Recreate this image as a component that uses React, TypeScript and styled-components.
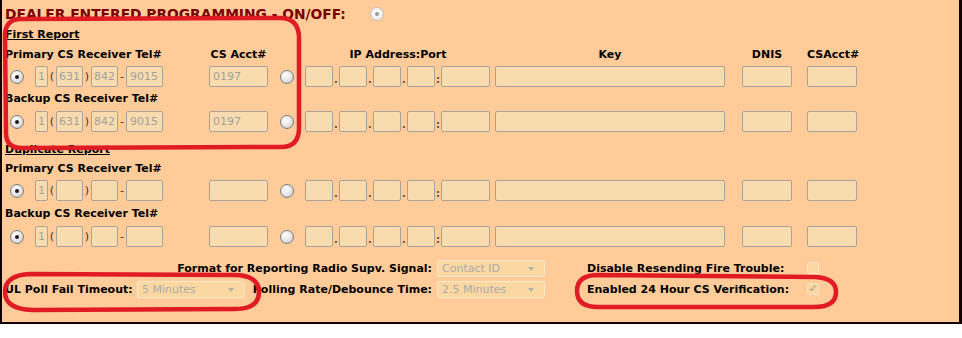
import styled, { createGlobalStyle } from "styled-components";

const GlobalStyles = createGlobalStyle`
  html, body {
    margin: 0;
    padding: 0;
    background: #ffffff;
  }
  body {
    font-family: "DejaVu Sans", Verdana, sans-serif;
    font-size: 11px;
    color: #000;
  }
`;

const Frame = styled.div`
  position: relative;
  box-sizing: border-box;
  width: 962px;
  height: 324px;
  background: #ffcc99;
  border-left: 2px solid #120000;
  border-right: 3px solid #120000;
  border-bottom: 2px solid #120000;
  padding-left: 3px;
  overflow: hidden;
`;

const TitleRow = styled.div`
  display: flex;
  align-items: center;
  height: 27px;
  gap: 24px;
`;

const Title = styled.span`
  font-size: 13.8px;
  font-weight: bold;
  color: #7a0000;
`;

const SectionTitle = styled.div<{ $top?: number }>`
  margin-top: ${(p) => p.$top ?? 0}px;
  height: 16px;
  line-height: 16px;
  font-weight: bold;
  text-decoration: underline;
`;

const SubLabel = styled.div<{ $h: number }>`
  height: ${(p) => p.$h}px;
  line-height: ${(p) => p.$h}px;
  font-weight: bold;
`;

const FieldGrid = styled.div<{ $h: number; $top?: number }>`
  display: grid;
  grid-template-columns: 204px 60px 36px 190px 247px 65px 50px;
  align-items: center;
  height: ${(p) => p.$h}px;
  margin-top: ${(p) => p.$top ?? 0}px;
`;

const HeadCell = styled.div<{ $w?: number; $align?: string }>`
  width: ${(p) => (p.$w ? `${p.$w}px` : "auto")};
  text-align: ${(p) => p.$align ?? "center"};
  font-weight: bold;
  white-space: nowrap;
`;

const Cluster = styled.div<{ $pad?: number }>`
  display: flex;
  align-items: center;
  padding-left: ${(p) => p.$pad ?? 0}px;
`;

const Box = styled.div<{ $w: number }>`
  box-sizing: border-box;
  width: ${(p) => p.$w}px;
  height: 21px;
  line-height: 19px;
  background: #f8dcb0;
  border: 1px solid #a8a29a;
  border-radius: 2px;
  color: #a4a09a;
  padding-left: 3px;
  white-space: nowrap;
  overflow: hidden;
`;

const SmallBox = styled(Box)`
  padding-left: 0;
  text-align: center;
`;

const Sep = styled.span<{ $w: number }>`
  width: ${(p) => p.$w}px;
  text-align: center;
  color: #333;
  font-size: 11px;
`;

const DotSep = styled.span`
  width: 6px;
  text-align: center;
  color: #6b4b2b;
  font-weight: bold;
  font-size: 10px;
  padding-top: 6px;
`;

const Radio = styled.span<{ $checked?: boolean; $pale?: boolean }>`
  position: relative;
  display: inline-block;
  box-sizing: border-box;
  width: 14px;
  height: 14px;
  border-radius: 50%;
  border: 1px solid ${(p) => (p.$pale ? "#c8c0b8" : "#7d7d7d")};
  background: ${(p) =>
    p.$pale
      ? "radial-gradient(circle at 45% 40%, #ffffff 0%, #f1f1f1 55%, #dcdcdc 100%)"
      : "radial-gradient(circle at 40% 35%, #ffffff 0%, #e9e9e9 45%, #bdbdbd 100%)"};
  &::after {
    content: "";
    display: ${(p) => (p.$checked ? "block" : "none")};
    position: absolute;
    left: 4px;
    top: 4px;
    width: 4px;
    height: 4px;
    border-radius: 50%;
    background: ${(p) => (p.$pale ? "#9a9a9a" : "#1b1b1b")};
  }
`;

const RadioCell = styled.div`
  display: flex;
  justify-content: center;
  padding-right: 1px;
`;

const OptionsGrid = styled.div`
  display: grid;
  grid-template-columns: 132px 108px 192px 108px 42px 220px 12px;
  grid-template-rows: 18px 18px;
  row-gap: 3px;
  align-items: center;
  margin-top: 12px;
`;

const OptLabel = styled.div<{ $span?: string; $right?: boolean }>`
  grid-column: ${(p) => p.$span ?? "auto"};
  justify-self: ${(p) => (p.$right ? "end" : "start")};
  padding-right: ${(p) => (p.$right ? 5 : 0)}px;
  font-weight: bold;
  white-space: nowrap;
`;

const SelectBox = styled.div<{ $col: number }>`
  grid-column: ${(p) => p.$col};
  position: relative;
  box-sizing: border-box;
  width: 108px;
  height: 17px;
  line-height: 15px;
  padding-left: 4px;
  background: #fbd8a2;
  border: 1px solid #fde9cc;
  border-radius: 2px;
  color: #ababab;
  &::after {
    content: "";
    position: absolute;
    right: 10px;
    top: 6px;
    border-left: 3px solid transparent;
    border-right: 3px solid transparent;
    border-top: 4px solid #b4b0aa;
  }
`;

const Check = styled.div<{ $row: number }>`
  grid-column: 7;
  grid-row: ${(p) => p.$row};
  box-sizing: border-box;
  width: 12px;
  height: 12px;
  background: #fbd6a0;
  border: 1px solid #fde6c8;
  border-radius: 2px;
  color: #9c9c9c;
  font-size: 11px;
  line-height: 10px;
  text-align: center;
`;

const Overlay = styled.svg`
  position: absolute;
  left: 0;
  top: 0;
  pointer-events: none;
`;

type Row = { tel: string[]; acct: string };

const PhoneField = ({ tel }: { tel: string[] }) => (
  <Cluster $pad={5}>
    <Radio $checked />
    <SmallBox $w={13} style={{ marginLeft: 11 }}>1</SmallBox>
    <Sep $w={8}>(</Sep>
    <SmallBox $w={27}>{tel[0]}</SmallBox>
    <Sep $w={8}>)</Sep>
    <SmallBox $w={27}>{tel[1]}</SmallBox>
    <Sep $w={8}>-</Sep>
    <Box $w={37}>{tel[2]}</Box>
  </Cluster>
);

const IpField = () => (
  <Cluster>
    <Box $w={28} />
    <DotSep>.</DotSep>
    <Box $w={28} />
    <DotSep>.</DotSep>
    <Box $w={28} />
    <DotSep>.</DotSep>
    <Box $w={28} />
    <DotSep>:</DotSep>
    <Box $w={49} />
  </Cluster>
);

const FieldRow = ({ row, top }: { row: Row; top?: number }) => (
  <FieldGrid $h={21} $top={top}>
    <PhoneField tel={row.tel} />
    <Box $w={59}>{row.acct}</Box>
    <RadioCell>
      <Radio />
    </RadioCell>
    <IpField />
    <Box $w={230} />
    <Box $w={50} />
    <Box $w={50} />
  </FieldGrid>
);

const filled: Row = { tel: ["631", "842", "9015"], acct: "0197" };
const empty: Row = { tel: ["", "", ""], acct: "" };

const App = () => {
  return (
    <>
      <GlobalStyles />
      <Frame>
        <TitleRow>
          <Title>DEALER ENTERED PROGRAMMING - ON/OFF:</Title>
          <Radio $checked $pale />
        </TitleRow>

        <SectionTitle>First Report</SectionTitle>
        <FieldGrid $h={22}>
          <HeadCell $align="left">Primary CS Receiver Tel#</HeadCell>
          <HeadCell $w={59}>CS Acct#</HeadCell>
          <div />
          <HeadCell $w={186}>IP Address:Port</HeadCell>
          <HeadCell $w={230}>Key</HeadCell>
          <HeadCell $w={50}>DNIS</HeadCell>
          <HeadCell $w={50}>CSAcct#</HeadCell>
        </FieldGrid>
        <FieldRow row={filled} top={1} />
        <SubLabel $h={24}>Backup CS Receiver Tel#</SubLabel>
        <FieldRow row={filled} />

        <SectionTitle $top={10}>Duplicate Report</SectionTitle>
        <SubLabel $h={22}>Primary CS Receiver Tel#</SubLabel>
        <FieldRow row={empty} />
        <SubLabel $h={25}>Backup CS Receiver Tel#</SubLabel>
        <FieldRow row={empty} />

        <OptionsGrid>
          <OptLabel $span="1 / 4" $right>
            Format for Reporting Radio Supv. Signal:
          </OptLabel>
          <SelectBox $col={4}>Contact ID</SelectBox>
          <OptLabel $span="6">Disable Resending Fire Trouble:</OptLabel>
          <Check $row={1} />

          <OptLabel $span="1">UL Poll Fail Timeout:</OptLabel>
          <SelectBox $col={2}>5 Minutes</SelectBox>
          <OptLabel $span="3" $right>
            Polling Rate/Debounce Time:
          </OptLabel>
          <SelectBox $col={4}>2.5 Minutes</SelectBox>
          <OptLabel $span="6">Enabled 24 Hour CS Verification:</OptLabel>
          <Check $row={2}>✓</Check>
        </OptionsGrid>

        <Overlay width="962" height="338" viewBox="0 0 962 338">
          <g fill="none" stroke="#e01b24" strokeWidth="4.5" strokeLinejoin="round">
            <path d="M3 34 Q4 19 19 19 L278 18 Q297 18 297 38 L297 128 Q297 147 279 147 L20 148 Q4 148 4 133 Z" />
            <path d="M28 274 L234 275 Q257 276 257 292 Q257 309 233 309 L30 310 Q3 309 3 292 Q3 275 28 274 Z" />
            <path d="M596 275 L813 277 Q834 278 834 292 Q834 307 812 307 L596 307 Q575 307 575 291 Q575 275 596 275 Z" />
          </g>
        </Overlay>
      </Frame>
    </>
  );
};

export default App;
